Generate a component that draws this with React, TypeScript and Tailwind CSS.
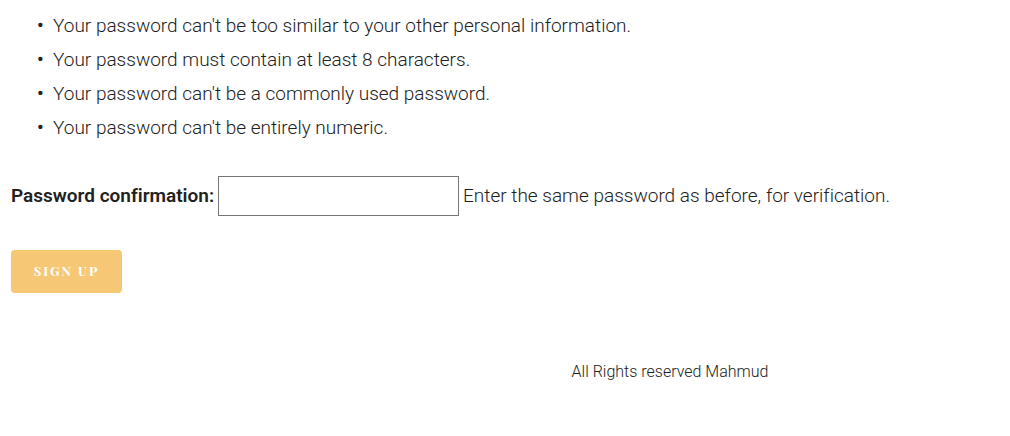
export default function App() {
  const rules = [
    "Your password can't be too similar to your other personal information.",
    "Your password must contain at least 8 characters.",
    "Your password can't be a commonly used password.",
    "Your password can't be entirely numeric.",
  ];
  return (
    <main className="bg-white pt-[9px] font-['Roboto',sans-serif] font-light text-[#212121] [font-variant-ligatures:none]">
      <form className="px-[11px] text-[19px] leading-[34px]" onSubmit={(e) => e.preventDefault()}>
        <ul id="password-rules" className="list-['•__'] pl-[42px] marker:font-medium">
          {rules.map((rule) => (
            <li key={rule}>{rule}</li>
          ))}
        </ul>
        <div className="mt-[31px] flex flex-wrap items-center gap-1">
          <label htmlFor="password2" className="font-semibold">Password confirmation:</label>
          <input
            id="password2"
            type="password"
            aria-describedby="password2-help"
            className="h-10 w-[241px] border border-[#767676] bg-white px-1"
          />
          <span id="password2-help">Enter the same password as before, for verification.</span>
        </div>
        <button
          type="submit"
          className="mt-[34px] block h-[43px] w-[111px] rounded bg-[#f6c875] pb-0.5 font-['Playfair_Display','Liberation_Serif',serif] text-[13px] leading-5 font-bold tracking-[2px] text-white uppercase"
        >
          Sign up
        </button>
      </form>
      <footer className="mt-[67px] pl-[330px] text-center text-base leading-6">All Rights reserved Mahmud</footer>
    </main>
  );
}
